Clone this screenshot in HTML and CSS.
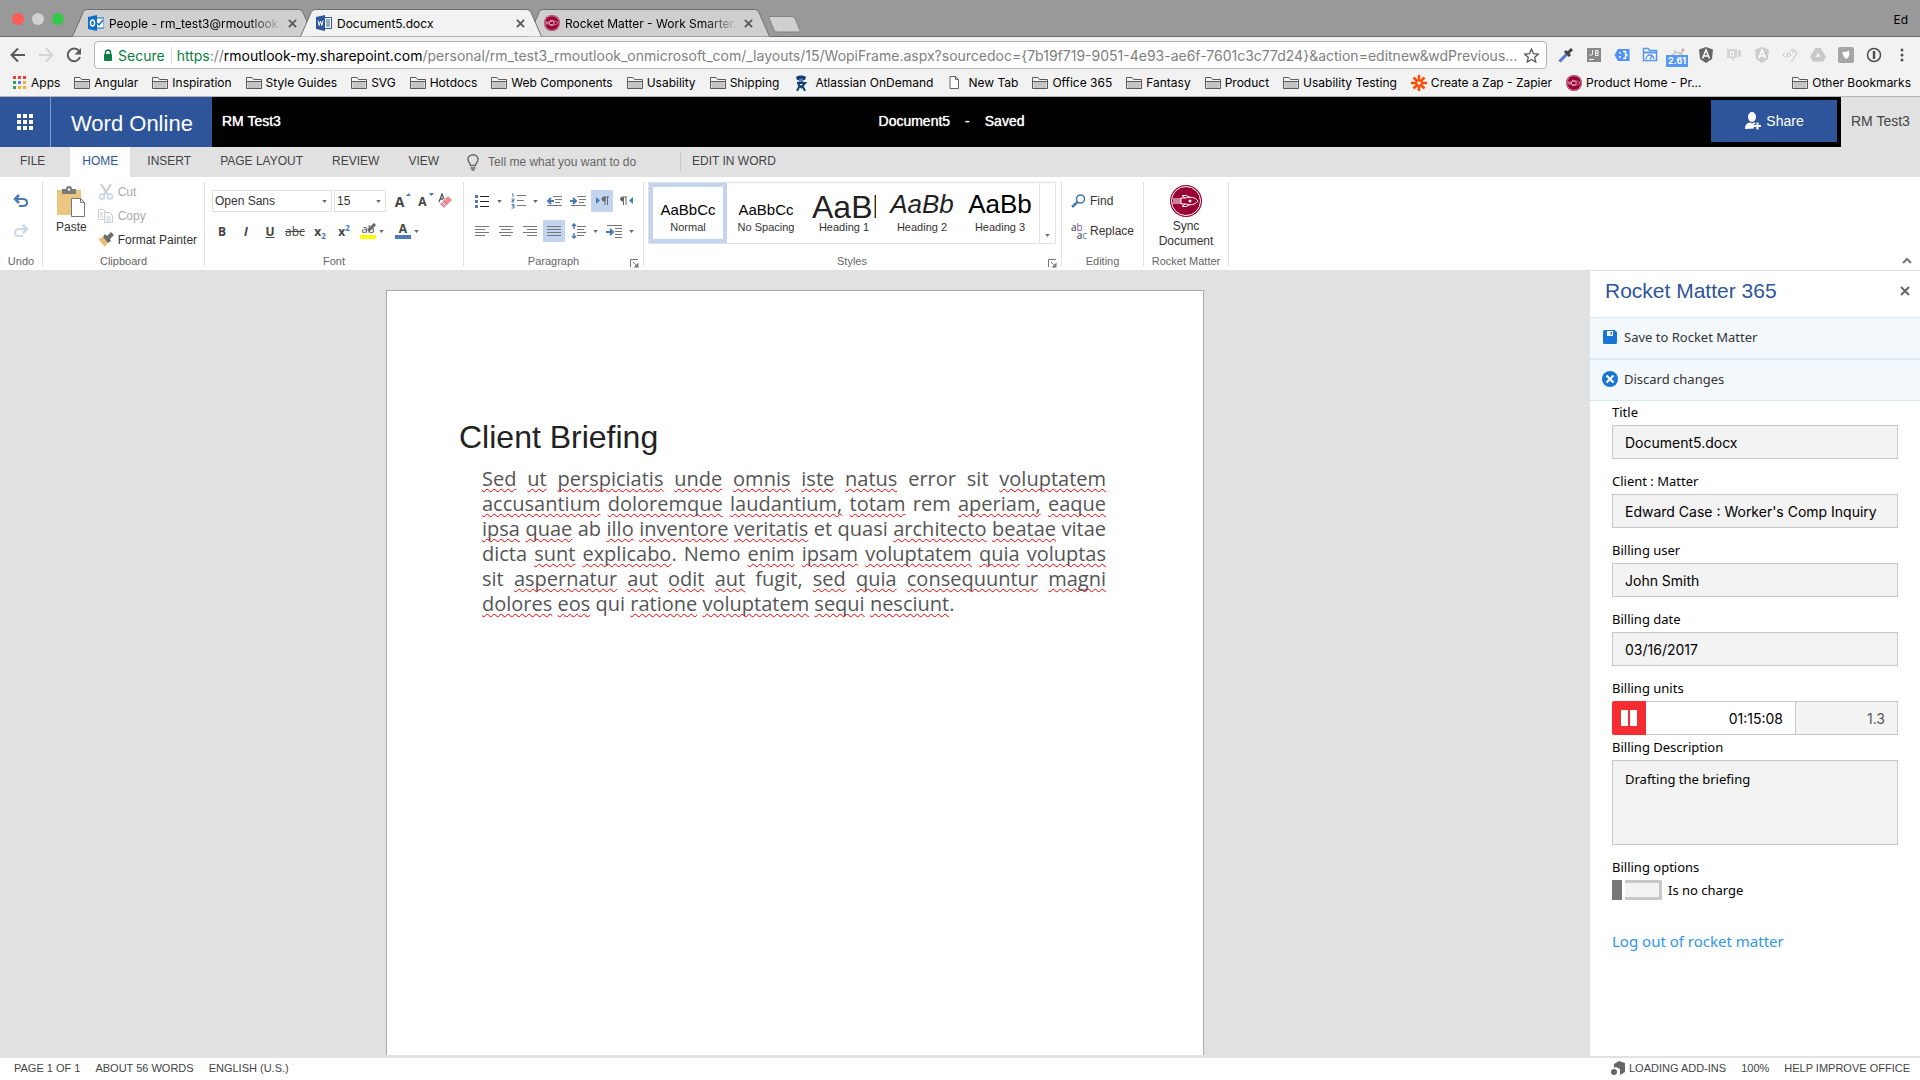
FILE: index.html
```
<!DOCTYPE html>
<html lang="en">
<head>
    <meta charset="UTF-8">
    <meta name="viewport" content="width=device-width, initial-scale=1.0">
    <title>Document5.docx</title>
    <link rel="stylesheet" href="styles.css">
</head>
<body>
    <!-- shared symbols -->
    <svg class="defs" width="0" height="0">
        <symbol id="folder" viewBox="0 0 16 14"><path d="M.5 12.500V1.500H6l1.500 2h8v9z" fill="#f5f5f5" stroke="#5a5a5a"/><path d="M1.500 5.500h13v6.500h-13z" fill="#c4c4c4"/><path d="M.5 5.500h15" stroke="#5a5a5a"/></symbol>
        <symbol id="tabshape" viewBox="0 0 242 28"><path d="M.5 27.500 11 3.500Q12.500.5 15 .5H227q2.500 0 4 3l10.500 24" stroke="#6e6e6e"/></symbol>
        <symbol id="rocket" viewBox="0 0 32 32"><circle cx="16" cy="16" r="16" fill="#990033"/><circle cx="16" cy="16" r="14.500" fill="none" stroke="#fff" stroke-width="1"/><path d="M11 13h5c4-1.500 9-1 12 3-3 4-8 4.500-12 3h-5zM15 13l-3-2.500h4l4 2M15 19l-3 2.500h4l4-2M3 14h8M3 16h8M3 18h8" fill="none" stroke="#fff"/><circle cx="20" cy="16" r="1.500" fill="#fff"/></symbol>
        <symbol id="caret" viewBox="0 0 6 4"><path d="M0 0h6L3 4z" fill="#666"/></symbol>
        <symbol id="launcher" viewBox="0 0 9 9"><path d="M.5 8V.5H8M3 3l4 4" fill="none" stroke="#777"/><path d="M8.500 3.500v5h-5z" fill="#777"/></symbol>
        <symbol id="cross" viewBox="0 0 10 10"><path d="M1 1l8 8M9 1 1 9" fill="none" stroke="currentColor" stroke-width="2"/></symbol>
        <symbol id="shield" viewBox="0 0 16 16"><path d="M8 0l7 2.500-1 9.500-6 4-6-4L1 2.500z"/><path d="M4.500 11.500 8 3l3.500 8.500M6 9h4" fill="none" stroke="#fff" stroke-width="1.500"/></symbol>
    </svg>

    <header class="browser">
        <div class="tab-strip">
            <div class="lights"><i class="red"></i><i class="grey"></i><i class="green"></i></div>
            <div class="tab">
                <svg class="shape" fill="#cfcfcf"><use href="#tabshape"/></svg>
                <svg width="16" height="16" viewBox="0 0 16 16"><path d="M8 3h8v10H8z" fill="#fff" stroke="#0f6fc5"/><path d="M9 8l2 2 4-5" fill="none" stroke="#0f6fc5" stroke-width="1.500"/><path d="M0 2l9-2v16l-9-2z" fill="#0f6fc5"/><ellipse cx="4.500" cy="8" rx="2" ry="3" fill="none" stroke="#fff" stroke-width="1.500"/></svg>
                <span class="tab-title fade">People - rm_test3@rmoutlook.c</span>
                <button class="tab-close" aria-label="Close tab"><svg width="9" height="9"><use href="#cross"/></svg></button>
            </div>
            <div class="tab active">
                <svg class="shape" fill="#f2f2f2"><use href="#tabshape"/></svg>
                <svg width="16" height="16" viewBox="0 0 16 16"><path d="M8 2.500h7.500v11H8z" fill="#fff" stroke="#2b579a"/><path d="M10 5h4M10 7h4M10 9h4M10 11h4" stroke="#2b579a"/><path d="M0 2l9-2v16l-9-2z" fill="#2b579a"/><path d="M2 5.500l1.200 5L4.500 6l1.300 4.500L7 5.500" fill="none" stroke="#fff"/></svg>
                <span class="tab-title">Document5.docx</span>
                <button class="tab-close" aria-label="Close tab"><svg width="9" height="9"><use href="#cross"/></svg></button>
            </div>
            <div class="tab">
                <svg class="shape" fill="#cfcfcf"><use href="#tabshape"/></svg>
                <svg width="16" height="16"><use href="#rocket"/></svg>
                <span class="tab-title fade">Rocket Matter - Work Smarter.</span>
                <button class="tab-close" aria-label="Close tab"><svg width="9" height="9"><use href="#cross"/></svg></button>
            </div>
            <button class="new-tab" aria-label="New tab"><svg width="33" height="17" viewBox="0 0 33 17"><path d="M1 2q-.5-1.500 1-1.500h22q2 0 3 2l5 12q.5 1.500-1 1.500H9q-2 0-3-2z" fill="#d0d0d0" stroke="#828282"/></svg></button>
            <span class="profile">Ed</span>
        </div>
        <div class="toolbar">
            <button aria-label="Back"><svg width="16" height="16" viewBox="0 0 16 16"><path d="M15 8H2M8 1.500 1.500 8 8 14.500" fill="none" stroke="#5a5a5a" stroke-width="2"/></svg></button>
            <button aria-label="Forward"><svg width="16" height="16" viewBox="0 0 16 16"><path d="M1 8h13M8 1.500 14.500 8 8 14.500" fill="none" stroke="#d3d3d3" stroke-width="2"/></svg></button>
            <button aria-label="Reload"><svg width="16" height="16" viewBox="0 0 16 16"><path d="M13 4A6.300 6.300 0 1 0 14 10" fill="none" stroke="#5a5a5a" stroke-width="2"/><path d="M15 1v6.500H8.500z" fill="#5a5a5a"/></svg></button>
            <div class="address">
                <svg width="10" height="13" viewBox="0 0 10 13"><rect x="1" y="5" width="8" height="7" rx="1" fill="#0b8043"/><path d="M2.500 6V3.500a2.500 2.500 0 0 1 5 0V6" fill="none" stroke="#0b8043" stroke-width="1.500"/></svg>
                <span class="secure">Secure</span>
                <div class="url" role="textbox" aria-label="Address"><span class="scheme">https</span>://<span class="host">rmoutlook-my.sharepoint.com</span>/personal/rm_test3_rmoutlook_onmicrosoft_com/_layouts/15/WopiFrame.aspx?sourcedoc={7b19f719-9051-4e93-ae6f-7601c3c77d24}&amp;action=editnew&amp;wdPrevious...</div>
                <svg width="15" height="15" viewBox="0 0 16 16"><path d="M8 1l2.100 4.900 5.300.5-4 3.500 1.200 5.100L8 12.300 3.400 15l1.200-5.100-4-3.500 5.300-.5z" fill="none" stroke="#5a5a5a" stroke-width="1.400"/></svg>
            </div>
            <div class="extensions">
                <svg viewBox="0 0 16 16"><path d="M1.500 14.500 9 7" stroke="#5577cc" stroke-width="3"/><path d="M7 4l5 5M10 6l4-4" stroke="#444" stroke-width="3"/></svg>
                <svg viewBox="0 0 16 16"><path d="M1 1h14v14H1z" fill="#888"/><path d="M3 12.500h5M6.500 3v4q0 1.500-3 1M9.500 3.500v5H12V3.500zM9.500 6H12" fill="none" stroke="#fff"/></svg>
                <svg viewBox="0 0 16 16"><path d="M4 2h11.500v12H4L.5 8z" fill="#4d90fe"/><path d="M9 4.500h2.500v2.500L13 8l-1.500 1v2.500H9M6 5v2M6 9v2" fill="none" stroke="#fff" stroke-width="1.500"/></svg>
                <svg viewBox="0 0 16 16"><path d="M1.500 13.500v-12h5l1 2h7v10z" fill="#fff" stroke="#5795ea" stroke-width="1.500"/><path d="M1.500 5.500h13" stroke="#5795ea" stroke-width="2"/><path d="M4 12a4 4 0 0 1 8 0M8 12l2-3" fill="none" stroke="#5795ea" stroke-width="1.500"/></svg>
                <span class="badged"><svg viewBox="0 0 16 16"><path d="M1 10a7 7 0 0 1 13 0M8 10l6-8M4 3l2 2" fill="none" stroke="#aaa"/><circle cx="13" cy="3" r="1.500" fill="#dba0a0"/></svg><b>2.61</b></span>
                <svg fill="#666"><use href="#shield"/></svg>
                <svg viewBox="0 0 16 16"><path d="M1 2h10v9H8v3l-3-3H1zM12 3h3v7h-3z" fill="#d4d4d4"/><path d="M4.500 5h3v4h-3z" fill="none" stroke="#fff"/></svg>
                <svg fill="#ccc"><use href="#shield"/></svg>
                <svg viewBox="0 0 16 16"><path d="M3 6 1 8l2 2M6 5 4.500 11M7 6l2 2-2 2M8 4a3.500 3.500 0 1 1 6 4q-2 2-2.500 4-.5 2-2.500 2M10 5q2-2 2.500 1" fill="none" stroke="#c4c4c4"/></svg>
                <svg viewBox="0 0 16 16"><path d="M5.500 1h5L16 10l-2.500 4.500h-11L0 10z" fill="#c8c8c8"/><path d="M8 5.500 5.500 10h5z" fill="#f2f2f2"/></svg>
                <svg viewBox="0 0 16 16"><rect width="16" height="16" rx="2" fill="#a5a5a5"/><path d="M4.500 5q4 0 6.500-1.500 1.500 6-2.500 8.500-4-2-4-7z" fill="#fff"/></svg>
                <svg viewBox="0 0 16 16"><circle cx="8" cy="8" r="6.500" fill="none" stroke="#4e4e4e" stroke-width="1.500"/><path d="M8 4v8" stroke="#4e4e4e" stroke-width="2.500"/></svg>
                <svg viewBox="0 0 16 16" fill="#555"><circle cx="8" cy="3" r="1.500"/><circle cx="8" cy="8" r="1.500"/><circle cx="8" cy="13" r="1.500"/></svg>
            </div>
        </div>
        <nav class="bookmarks">
            <a href="#" class="apps"><svg width="13" height="13" viewBox="0 0 13 13"><path d="M0 0h3v3H0zM5 0h3v3H5zM10 0h3v3h-3z" fill="#ea4335"/><path d="M0 5h3v3H0zM0 10h3v3H0z" fill="#34a060"/><path d="M5 5h3v3H5z" fill="#4285f4"/><path d="M10 5h3v3h-3zM5 10h3v3H5zM10 10h3v3h-3z" fill="#f5b028"/></svg>Apps</a>
            <a href="#"><svg><use href="#folder"/></svg>Angular</a>
            <a href="#"><svg><use href="#folder"/></svg>Inspiration</a>
            <a href="#"><svg><use href="#folder"/></svg>Style Guides</a>
            <a href="#"><svg><use href="#folder"/></svg>SVG</a>
            <a href="#"><svg><use href="#folder"/></svg>Hotdocs</a>
            <a href="#"><svg><use href="#folder"/></svg>Web Components</a>
            <a href="#"><svg><use href="#folder"/></svg>Usability</a>
            <a href="#"><svg><use href="#folder"/></svg>Shipping</a>
            <a href="#" class="wide"><svg width="12" height="16" viewBox="0 0 12 16"><path d="M1 2q2-2 5-1.500Q9 0 11 2l-1 3H2z" fill="#123f73"/><circle cx="6" cy="6" r="2.500" fill="#5b7fa8"/><path d="M2 8h8L7.500 11l2.500 5M4.500 11 2 16M3 9l4 4" fill="none" stroke="#123f73" stroke-width="2"/></svg>Atlassian OnDemand</a>
            <a href="#" class="wide"><svg width="11" height="13" viewBox="0 0 11 13"><path d="M1 .5h5.500l3 3v9H1zM6.500.5v3h3" fill="#fff" stroke="#666"/></svg>New Tab</a>
            <a href="#"><svg><use href="#folder"/></svg>Office 365</a>
            <a href="#"><svg><use href="#folder"/></svg>Fantasy</a>
            <a href="#"><svg><use href="#folder"/></svg>Product</a>
            <a href="#"><svg><use href="#folder"/></svg>Usability Testing</a>
            <a href="#"><svg width="16" height="16" viewBox="0 0 16 16"><path d="M8 0v16M0 8h16M2.500 2.500l11 11M13.500 2.500l-11 11" stroke="#ff4a00" stroke-width="2.500"/><circle cx="8" cy="8" r="1.800" fill="#f2f2f2"/></svg>Create a Zap - Zapier</a>
            <a href="#"><svg width="16" height="16"><use href="#rocket"/></svg>Product Home - Pr...</a>
            <a href="#" class="other"><svg><use href="#folder"/></svg>Other Bookmarks</a>
        </nav>
    </header>

    <div class="app-bar">
        <button class="launcher" aria-label="App launcher"><svg width="17" height="16" viewBox="0 0 17 16" fill="#fff"><path d="M0 0h4v4H0zM6 0h4v4H6zM12 0h4v4h-4zM0 6h4v4H0zM6 6h4v4H6zM12 6h4v4h-4zM0 12h4v4H0zM6 12h4v4H6zM12 12h4v4h-4z"/></svg></button>
        <a href="#" class="brand">Word Online</a>
        <div class="doc-bar">
            <span class="crumb">RM Test3</span>
            <span class="doc-name"><span>Document5</span><span>-</span><span>Saved</span></span>
            <button class="share"><svg width="18" height="18" viewBox="0 0 18 18" fill="#fff"><ellipse cx="8" cy="5" rx="4" ry="5"/><path d="M1 17q0-6 5-6.500l2 1 2-1q2 0 3 2v1h-3v3z"/><path d="M13.500 10.500v7M10 14h7" stroke="#2e5599" stroke-width="4"/><path d="M13.500 10.500v7M10 14h7" stroke="#fff" stroke-width="2"/></svg>Share</button>
        </div>
        <span class="user">RM Test3</span>
    </div>

    <nav class="ribbon-tabs">
        <button class="file">FILE</button>
        <button class="on">HOME</button>
        <button>INSERT</button>
        <button>PAGE LAYOUT</button>
        <button>REVIEW</button>
        <button>VIEW</button>
        <label class="tell" for="tell"><svg width="12" height="17" viewBox="0 0 12 17"><path d="M3.500 11.500C3.500 9 1 8.500 1 5.500a5 4.800 0 0 1 10 0c0 3-2.500 3.500-2.500 6z" fill="none" stroke="#666" stroke-width="1.400"/><path d="M3.500 14h5M4.500 16h3" stroke="#666" stroke-width="1.500"/></svg></label>
        <input id="tell" type="text" placeholder="Tell me what you want to do">
        <button class="edit">EDIT IN WORD</button>
    </nav>

    <div class="ribbon">
        <section class="group undo">
            <div class="stack">
                <button aria-label="Undo"><svg width="16" height="16" viewBox="0 0 16 16"><path d="M2 6h8q4 0 4 3.500T10 13H6" fill="none" stroke="#4a7ab5" stroke-width="2"/><path d="M6 2 2 6l4 4" fill="none" stroke="#4a7ab5" stroke-width="2.500"/></svg></button>
                <button aria-label="Redo"><svg width="16" height="16" viewBox="0 0 16 16"><path d="M14 6H6Q2 6 2 9.500T6 13h4" fill="none" stroke="#cbd9ea" stroke-width="2"/><path d="M10 2l4 4-4 4" fill="none" stroke="#cbd9ea" stroke-width="2.500"/></svg></button>
            </div>
            <h2>Undo</h2>
        </section>
        <section class="group clipboard">
            <div class="row">
                <button class="big"><svg width="30" height="32" viewBox="0 0 30 32"><path d="M1 4h24v25H1z" fill="#eac681"/><path d="M6 3h4q0-3 3-3t3 3h4v5H6z" fill="#7a7a7a"/><circle cx="13" cy="3.500" r="1.200" fill="#fff"/><path d="M15.500 12.500h9l4 4v14h-13z" fill="#fff" stroke="#777"/><path d="M24.500 12.500v4h4" fill="none" stroke="#777"/></svg>Paste</button>
                <div class="list">
                    <button disabled><svg width="16" height="16" viewBox="0 0 16 16"><path d="M3 0l7 11M13 0 6 11" stroke="#ccc" stroke-width="2"/><circle cx="4" cy="12.500" r="2.500" fill="none" stroke="#c5d5e8" stroke-width="1.500"/><circle cx="12" cy="12.500" r="2.500" fill="none" stroke="#c5d5e8" stroke-width="1.500"/></svg>Cut</button>
                    <button disabled><svg width="16" height="16" viewBox="0 0 16 16"><path d="M.5 1.500h5l3 3v7h-8z" fill="#fff" stroke="#ccc"/><path d="M6.500 4.500h5l3 3v7h-8z" fill="#fff" stroke="#ccc"/><path d="M2 5h3M2 7h3M2 9h3M8 9h5M8 11h5M8 13h5" stroke="#bcd0e8"/></svg>Copy</button>
                    <button><svg width="16" height="16" viewBox="0 0 16 16"><path d="M0 7l5-2 5 5-3 5z" fill="#eac07a"/><path d="M5 5l2-3 2 2 4-4 3 3-4 4 1 2-3 2z" fill="#6c6c6c"/></svg>Format Painter</button>
                </div>
            </div>
            <h2>Clipboard</h2>
        </section>
        <section class="group font">
            <div class="row top">
                <div class="pick name"><select aria-label="Font"><option>Open Sans</option></select><svg><use href="#caret"/></svg></div>
                <div class="pick size"><select aria-label="Font size"><option>15</option></select><svg><use href="#caret"/></svg></div>
                <button aria-label="Grow font" class="glyph">A<svg class="tick" width="5" height="3" viewBox="0 0 5 3"><path d="M0 3h5L2.500 0z" fill="#4a7ab5"/></svg></button>
                <button aria-label="Shrink font" class="glyph small">A<svg class="tick" width="5" height="3" viewBox="0 0 5 3"><path d="M0 0h5L2.500 3z" fill="#4a7ab5"/></svg></button>
                <button aria-label="Clear formatting"><svg width="15" height="16" viewBox="0 0 15 16"><path d="M1 9 4 1l2 5M2 6h3" fill="none" stroke="#555" stroke-width="1.300"/><path d="M2 11 10 3l4 4-8 8z" fill="#e8899b"/><path d="M4 9l4 4" stroke="#fff"/></svg></button>
            </div>
            <div class="row marks">
                <button><b>B</b></button>
                <button><b><i>I</i></b></button>
                <button><b><u>U</u></b></button>
                <button class="strike"><s>abc</s></button>
                <button><b>x<sub>2</sub></b></button>
                <button><b>x<sup>2</sup></b></button>
                <button aria-label="Highlight" class="swatch hl"><span>ab</span><svg class="pen" width="10" height="9" viewBox="0 0 10 9"><path d="M1 8 8 1" stroke="#666" stroke-width="3"/></svg></button>
                <svg class="caret"><use href="#caret"/></svg>
                <button aria-label="Font color" class="swatch fc"><span>A</span></button>
                <svg class="caret"><use href="#caret"/></svg>
            </div>
            <h2>Font</h2>
        </section>
        <section class="group paragraph">
            <div class="row top">
                <button aria-label="Bullets"><svg width="14" height="14" viewBox="0 0 14 14"><path d="M0 1h3v3H0zM0 6h3v3H0zM0 11h3v3H0z" fill="#4a7ab5"/><path d="M5 2.500h9M5 7.500h9M5 12.500h9" stroke="#222"/></svg></button>
                <svg class="caret"><use href="#caret"/></svg>
                <button aria-label="Numbering"><svg width="15" height="16" viewBox="0 0 15 16"><path d="M1 1h1v3M.5 6H3v1.500H1V9h2M.5 11.500H3V15H.5M1 13h2" fill="none" stroke="#4a7ab5"/><path d="M6 2.500h9M6 7.500h7M6 12.500h9" stroke="#777"/></svg></button>
                <svg class="caret"><use href="#caret"/></svg>
                <button aria-label="Outdent"><svg width="16" height="11" viewBox="0 0 16 11"><path d="M7 .5h9M9 3.500h7M9 6.500h5M1 9.500h15" stroke="#777"/><path d="M8 5H2M5 2 2 5l3 3" fill="none" stroke="#4a7ab5" stroke-width="2"/></svg></button>
                <button aria-label="Indent"><svg width="16" height="11" viewBox="0 0 16 11"><path d="M7 .5h9M9 3.500h7M9 6.500h5M1 9.500h15" stroke="#777"/><path d="M0 5h6M3 2l3 3-3 3" fill="none" stroke="#4a7ab5" stroke-width="2"/></svg></button>
                <button aria-label="Left to right" class="pressed"><svg width="13" height="10" viewBox="0 0 13 10"><path d="M0 1v7l4-3.500z" fill="#4a7ab5"/><path d="M13 1H8a2 2 0 0 0 0 4h1V1M9 1v8M11.500 1v8" fill="#666" stroke="#666"/></svg></button>
                <button aria-label="Right to left"><svg width="13" height="10" viewBox="0 0 13 10"><path d="M13 1v7L9 4.500z" fill="#4a7ab5"/><path d="M7 1H2.500a2 2 0 0 0 0 4h1V1M3.500 1v8M6 1v8" fill="#666" stroke="#666"/></svg></button>
            </div>
            <div class="row aligns">
                <button aria-label="Align left"><svg width="14" height="11" viewBox="0 0 14 11"><path d="M0 .5h14M0 3.500h10M0 6.500h14M0 9.500h10" stroke="#777"/></svg></button>
                <button aria-label="Center"><svg width="14" height="11" viewBox="0 0 14 11"><path d="M0 .5h14M2 3.500h10M0 6.500h14M2 9.500h10" stroke="#777"/></svg></button>
                <button aria-label="Align right"><svg width="14" height="11" viewBox="0 0 14 11"><path d="M0 .5h14M4 3.500h10M0 6.500h14M4 9.500h10" stroke="#777"/></svg></button>
                <button aria-label="Justify" class="pressed"><svg width="14" height="11" viewBox="0 0 14 11"><path d="M0 .5h14M0 3.500h14M0 6.500h14M0 9.500h14" stroke="#777"/></svg></button>
                <button aria-label="Line spacing"><svg width="15" height="16" viewBox="0 0 15 16"><path d="M6 3.500h9M6 6.500h7M6 9.500h9M6 12.500h7" stroke="#777"/><path d="M3 1v5M3 10v5M1 3l2-2 2 2M1 13l2 2 2-2" fill="none" stroke="#4a7ab5" stroke-width="1.500"/></svg></button>
                <svg class="caret"><use href="#caret"/></svg>
                <button aria-label="Special indent"><svg width="16" height="13" viewBox="0 0 16 13"><path d="M1 .5h15M9 3.500h7M9 6.500h7M9 9.500h7M9 12.500h7" stroke="#777"/><path d="M0 7h6M4 4l3 3-3 3" fill="none" stroke="#4a7ab5" stroke-width="2"/></svg></button>
                <svg class="caret"><use href="#caret"/></svg>
            </div>
            <h2>Paragraph</h2>
            <svg class="dialog"><use href="#launcher"/></svg>
        </section>
        <section class="group styles">
            <div class="gallery">
                <button class="selected"><span class="sample">AaBbCc</span>Normal</button>
                <button><span class="sample">AaBbCc</span>No Spacing</button>
                <button><span class="sample h1">AaBb</span>Heading 1</button>
                <button><span class="sample h2">AaBb</span>Heading 2</button>
                <button><span class="sample h3">AaBb</span>Heading 3</button>
                <button class="more" aria-label="More styles"><svg class="caret"><use href="#caret"/></svg></button>
            </div>
            <h2>Styles</h2>
            <svg class="dialog"><use href="#launcher"/></svg>
        </section>
        <section class="group editing">
            <div class="stack">
                <button><svg width="16" height="14" viewBox="0 0 16 14"><circle cx="9.500" cy="5" r="4" fill="none" stroke="#4a7ab5" stroke-width="1.600"/><path d="M6.500 8 1 13" stroke="#4a7ab5" stroke-width="2.500"/></svg>Find</button>
                <button><span class="swap"><span>a<em>b</em></span><span class="to">a<em>c</em></span></span>Replace</button>
            </div>
            <h2>Editing</h2>
        </section>
        <section class="group sync">
            <button class="big"><svg width="32" height="32"><use href="#rocket"/></svg>Sync Document</button>
            <h2>Rocket Matter</h2>
        </section>
        <button class="collapse" aria-label="Collapse ribbon"><svg width="10" height="7" viewBox="0 0 10 7"><path d="M1 6l4-4 4 4" fill="none" stroke="#777" stroke-width="2"/></svg></button>
    </div>

    <div class="workspace">
        <main class="canvas">
            <article class="page">
                <h1>Client Briefing</h1>
                <p><span>Sed</span> <span>ut</span> <span>perspiciatis</span> <span>unde</span> <span>omnis</span> <span>iste</span> <span>natus</span> error sit <span>voluptatem</span> <span>accusantium</span> <span>doloremque</span> <span>laudantium,</span> <span>totam</span> rem <span>aperiam,</span> <span>eaque</span> <span>ipsa</span> <span>quae</span> ab <span>illo</span> <span>inventore</span> <span>veritatis</span> et quasi <span>architecto</span> <span>beatae</span> vitae dicta <span>sunt</span> <span>explicabo</span>. Nemo <span>enim</span> <span>ipsam</span> <span>voluptatem</span> <span>quia</span> <span>voluptas</span> sit <span>aspernatur</span> <span>aut</span> <span>odit</span> <span>aut</span> fugit, <span>sed</span> <span>quia</span> <span>consequuntur</span> <span>magni</span> <span>dolores</span> <span>eos</span> qui <span>ratione</span> <span>voluptatem</span> <span>sequi</span> <span>nesciunt</span>.</p>
            </article>
        </main>
        <aside class="panel">
            <header>
                <h2>Rocket Matter 365</h2>
                <button aria-label="Close panel"><svg width="10" height="10"><use href="#cross"/></svg></button>
            </header>
            <button class="action"><svg width="16" height="14" viewBox="0 0 16 14"><path d="M2.500 0h10L15 2v10.500q0 1.500-1.500 1.500h-11Q1 14 1 12.500v-11Q1 0 2.500 0z" fill="#1976d2"/><path d="M5 1h6v5H5z" fill="#fff"/><path d="M8.500 2h1.500v2.500H8.500z" fill="#1976d2"/></svg>Save to Rocket Matter</button>
            <button class="action"><svg width="16" height="16" viewBox="0 0 16 16"><circle cx="8" cy="8" r="8" fill="#1976d2"/><path d="M4.500 4.500l7 7M11.500 4.500l-7 7" stroke="#fff" stroke-width="2.200"/></svg>Discard changes</button>
            <form>
                <label for="title">Title</label>
                <input id="title" type="text" value="Document5.docx">
                <label for="matter">Client : Matter</label>
                <input id="matter" type="text" value="Edward Case : Worker's Comp Inquiry">
                <label for="user">Billing user</label>
                <input id="user" type="text" value="John Smith">
                <label for="date">Billing date</label>
                <input id="date" type="text" value="03/16/2017">
                <label for="timer">Billing units</label>
                <div class="units">
                    <button type="button" aria-label="Pause timer"><svg width="16" height="16" viewBox="0 0 16 16"><path d="M0 0h7v16H0zM9 0h7v16H9z" fill="#fff"/></svg></button>
                    <input id="timer" type="text" value="01:15:08">
                    <input class="total" type="text" value="1.3" aria-label="Units">
                </div>
                <label for="description">Billing Description</label>
                <textarea id="description">Drafting the briefing</textarea>
                <div class="legend">Billing options</div>
                <label class="toggle"><input type="checkbox">Is no charge</label>
                <a href="#" class="logout">Log out of rocket matter</a>
            </form>
        </aside>
    </div>

    <footer class="status">
        <span>PAGE 1 OF 1</span>
        <span>ABOUT 56 WORDS</span>
        <span>ENGLISH (U.S.)</span>
        <span class="addins"><svg width="14" height="14" viewBox="0 0 14 14" fill="#666"><path d="M3 3l5-3 6 2v9l-5 3V8L5 6 3 7z"/><circle cx="3" cy="11" r="3"/></svg>LOADING ADD-INS</span>
        <span>100%</span>
        <span>HELP IMPROVE OFFICE</span>
    </footer>
</body>
</html>
```
FILE: styles.css
```
* {
    box-sizing: border-box;
}
body {
    margin: 0;
    height: 100vh;
    display: flex;
    flex-direction: column;
    overflow: hidden;
    background: #fff;
    color: #444;
    font-family: "Liberation Sans", Arial, sans-serif;
    font-size: 12px;
}
button, input, select, textarea {
    font: inherit;
    color: inherit;
}
button {
    display: flex;
    align-items: center;
    justify-content: center;
    padding: 0;
    border: 0;
    background: none;
    white-space: nowrap;
}
a {
    color: inherit;
    text-decoration: none;
}
h1, h2, p {
    margin: 0;
    font-weight: normal;
}
svg {
    flex: none;
}
.defs {
    position: absolute;
}

/* Browser window */
.browser {
    flex: none;
    background: #f2f2f2;
    border-bottom: 1px solid #b4b4b4;
    color: #000;
    font-family: Inter, sans-serif;
}
.tab-strip {
    display: flex;
    align-items: flex-end;
    height: 37px;
    background: #999;
    border-bottom: 1px solid #6e6e6e;
}
.lights {
    display: flex;
    gap: 8px;
    width: 72px;
    height: 25px;
    padding-left: 12px;
    align-self: flex-start;
    align-items: flex-end;
}
.lights i {
    width: 12px;
    height: 12px;
    border-radius: 50%;
}
.lights .red {
    background: #fc5b57;
}
.lights .grey {
    background: #d0d0d0;
}
.lights .green {
    background: #34c84a;
}
.tab {
    position: relative;
    display: flex;
    align-items: center;
    width: 242px;
    height: 28px;
    margin: 0 -14px -1px 0;
    padding: 0 17px 0 16px;
}
.tab.active {
    z-index: 1;
}
.tab > svg, .tab > span, .tab > button {
    position: relative;
}
.tab .shape {
    position: absolute;
    left: 0;
    top: 0;
    width: 242px;
    height: 28px;
}
.tab-title {
    flex: 1;
    margin: 0 5px;
    overflow: hidden;
    white-space: nowrap;
}
.tab-title.fade {
    mask-image: linear-gradient(to right, #000 80%, transparent);
}
.tab-close {
    color: #5a5a5a;
}
.new-tab {
    margin: 0 0 3px 12px;
}
.profile {
    margin-left: auto;
    padding: 0 12px 9px 0;
}
.toolbar {
    display: flex;
    align-items: center;
    height: 34px;
    padding: 2px 10px 0 10px;
    gap: 12px;
}
.address {
    flex: 1;
    display: flex;
    align-items: center;
    height: 28px;
    min-width: 0;
    padding: 0 7px 0 8px;
    border: 1px solid #b5b5b5;
    border-radius: 4px;
    background: #fff;
    font-size: 14px;
}
.secure {
    margin: 0 6px 0 5px;
    color: #0b8043;
}
.url {
    flex: 1;
    min-width: 0;
    padding-left: 5px;
    border-left: 1px solid #ddd;
    color: #808080;
    overflow: hidden;
    text-overflow: ellipsis;
    white-space: nowrap;
}
.scheme {
    color: #0b8043;
}
.host {
    color: #000;
}
.extensions {
    display: flex;
    gap: 12px;
    margin-left: -1px;
}
.extensions svg {
    display: block;
    width: 16px;
    height: 16px;
}
.badged {
    position: relative;
}
.badged b {
    position: absolute;
    top: 8px;
    left: -4px;
    padding: 0 2px;
    background: #5599f5;
    color: #fff;
    font-size: 9px;
    line-height: 12px;
}
.bookmarks {
    display: flex;
    align-items: center;
    gap: 14px;
    height: 25px;
    padding: 0 9px 2px 13px;
}
.bookmarks a {
    display: flex;
    align-items: center;
    gap: 4px;
    white-space: nowrap;
}
.bookmarks a > svg:not([width]) {
    width: 16px;
    height: 14px;
}
.bookmarks .apps {
    gap: 5px;
}
.bookmarks .wide {
    gap: 8px;
    padding-left: 2px;
}
.bookmarks .other {
    margin-left: auto;
}

/* Word header */
.app-bar {
    flex: none;
    display: flex;
    height: 50px;
    background: #e1e1e1;
    font-size: 14px;
}
.app-bar .launcher {
    width: 51px;
    border-right: 1px solid #7f9ac6;
    background: #2e5599;
}
.brand {
    width: 161px;
    padding: 0 20px;
    background: #2e5599;
    color: #fff;
    font-size: 22px;
    line-height: 53px;
    white-space: nowrap;
}
.doc-bar {
    flex: 1;
    display: flex;
    align-items: center;
    justify-content: space-between;
    padding: 0 4px 2px 10px;
    background: #000;
    color: #fff;
    text-shadow: 0 0 1px #fff;
}
.crumb, .share {
    width: 126px;
}
.doc-name {
    display: flex;
    gap: 15px;
    margin-right: 156px;
}
.doc-bar .share {
    height: 42px;
    gap: 4px;
    background: #2e5599;
}
.user {
    width: 79px;
    padding-left: 10px;
    line-height: 48px;
}

/* Ribbon */
.ribbon-tabs {
    flex: none;
    display: flex;
    height: 30px;
    background: #e1e1e1;
}
.ribbon-tabs button {
    margin-right: 5px;
    padding: 0 12px 3px;
}
.ribbon-tabs .file {
    padding: 0 12px 3px 20px;
    margin-right: 13px;
}
.ribbon-tabs .on {
    background: #fff;
    color: #2e5599;
}
.tell {
    display: flex;
    align-items: center;
    margin: 0 9px 0 11px;
}
.ribbon-tabs input {
    width: 180px;
    padding: 0;
    border: 0;
    background: none;
}
.ribbon-tabs input::placeholder {
    color: #666;
}
.ribbon-tabs .edit {
    align-self: center;
    height: 18px;
    margin-left: 12px;
    padding: 0 11px 2px;
    border-left: 1px solid #c6c6c6;
}
.ribbon {
    flex: none;
    display: flex;
    height: 94px;
    padding: 5px 0 4px;
    border-bottom: 1px solid #e1e1e1;
}
.group {
    position: relative;
    display: flex;
    flex-direction: column;
    border-right: 1px solid #e1e1e1;
}
.group h2 {
    margin-top: auto;
    font-size: 11px;
    line-height: 10px;
    text-align: center;
    color: #666;
}
.row {
    display: flex;
    align-items: center;
}
.dialog {
    position: absolute;
    right: 4px;
    bottom: -2px;
    width: 9px;
    height: 9px;
}
svg.caret {
    width: 5px;
    height: 3px;
}
.undo {
    width: 43px;
}
.stack {
    display: flex;
    flex-direction: column;
    align-items: center;
    gap: 14px;
    padding-top: 11px;
}
.clipboard {
    width: 162px;
}
.clipboard .row {
    align-items: flex-start;
    padding: 4px 0 0 13px;
    gap: 11px;
}
.big {
    flex-direction: column;
    color: #333;
}
.clipboard .big {
    gap: 2px;
}
.list {
    display: flex;
    flex-direction: column;
    align-items: flex-start;
    gap: 8px;
    margin-top: -2px;
    color: #333;
}
.list button {
    gap: 4px;
}
.list button:disabled {
    color: #aaa;
}
.font {
    width: 259px;
}
.font .row {
    padding-left: 7px;
}
.font .marks {
    padding-left: 5px;
}
.row.top {
    height: 38px;
}
.pick {
    position: relative;
    margin-right: 2px;
}
.pick select {
    width: 100%;
    height: 22px;
    padding: 0 2px;
    border: 1px solid #e1e1e1;
    background: #fff;
    color: #333;
    appearance: none;
}
.pick svg {
    position: absolute;
    right: 5px;
    top: 10px;
    width: 5px;
    height: 3px;
}
.pick.name {
    width: 120px;
}
.pick.size {
    width: 52px;
}
.font .top button {
    position: relative;
    width: 23px;
    height: 22px;
}
.glyph {
    font: bold 14px "Open Sans", sans-serif;
}
.glyph.small {
    font-size: 12px;
}
.tick {
    position: absolute;
    top: 3px;
    right: 0;
}
.marks {
    height: 22px;
    font-family: "Open Sans", sans-serif;
    font-size: 12px;
}
.marks button {
    width: 24px;
    height: 22px;
}
.marks .strike {
    width: 26px;
}
.marks sub, .marks sup {
    color: #4a7ab5;
    font-size: 8px;
    line-height: 0;
}
.marks .swatch {
    position: relative;
    width: 16px;
    height: 16px;
    margin: 0 3px 0 4px;
    border-bottom: 4px solid #ff0;
    line-height: 12px;
}
.marks .fc {
    margin-left: 11px;
    border-color: #4a7ab5;
    font-weight: bold;
}
.hl span {
    font-size: 11px;
}
.pen {
    position: absolute;
    right: -1px;
    top: 0;
}
.paragraph {
    width: 180px;
}
.paragraph .row {
    padding-left: 6px;
}
.paragraph button {
    width: 24px;
    height: 22px;
}
.paragraph button.pressed {
    width: 22px;
    margin: 0 1px;
    background: #c2d4f0;
}
.paragraph .caret {
    margin: 0 4px 0 3px;
}
.aligns {
    height: 22px;
}
.styles {
    width: 418px;
    padding: 0 5px 0 4px;
}
.gallery {
    display: flex;
    height: 62px;
    border: 1px solid #e1e1e1;
}
.gallery button {
    flex-direction: column;
    justify-content: flex-end;
    width: 78px;
    padding-bottom: 4px;
    border: 4px solid transparent;
    font-size: 11px;
    line-height: 15px;
    color: #333;
}
.gallery .selected {
    border-color: #c2d4f0;
}
.sample {
    color: #000;
    font-size: 15px;
    line-height: 20px;
}
.sample.h1 {
    width: 64px;
    overflow: hidden;
    font-size: 32px;
    line-height: 40px;
    color: #222;
    text-align: left;
}
.sample.h2, .sample.h3 {
    font-size: 26px;
    line-height: 32px;
}
.sample.h2 {
    font-style: italic;
    color: #222;
}
.gallery .more {
    width: auto;
    flex: 1;
    padding-bottom: 6px;
    border: 0;
    border-left: 1px solid #e1e1e1;
}
.editing {
    width: 82px;
}
.editing .stack {
    align-items: flex-start;
    padding-left: 9px;
    color: #333;
}
.editing button {
    gap: 3px;
    height: 16px;
}
.swap {
    display: flex;
    flex-direction: column;
    width: 16px;
    font: 10px/8px "Open Sans", sans-serif;
    text-align: left;
}
.swap em {
    font-style: normal;
    color: #8a4ea8;
}
.swap .to {
    text-align: right;
}
.swap .to em {
    color: #4a7ab5;
}
.sync {
    width: 85px;
}
.sync .big {
    margin-top: 3px;
    padding: 0 10px;
    gap: 2px;
    line-height: 15px;
    white-space: normal;
}
.collapse {
    align-self: flex-end;
    margin: 0 8px 2px auto;
}

/* Document area */
.workspace {
    flex: 1;
    display: flex;
    min-height: 0;
    padding-bottom: 2px;
    background: #e1e1e1;
}
.canvas {
    flex: 1;
    display: flex;
    justify-content: center;
    padding-top: 19px;
    padding-bottom: 1px;
}
.page {
    width: 818px;
    padding: 126px 97px 0 72px;
    border: 1px solid #aaa;
    border-bottom: 0;
    background: #fff;
}
.page h1 {
    color: #222;
    font-size: 32px;
    line-height: 40px;
}
.page p {
    margin: 9px 0 0 23px;
    color: #555;
    font-family: "Open Sans", sans-serif;
    font-size: 20px;
    line-height: 25px;
    text-align: justify;
}
.page p span {
    text-decoration: underline wavy #e00 1px;
    text-decoration-skip-ink: none;
    text-underline-offset: 2px;
}

/* Task pane */
.panel {
    width: 330px;
    background: #fff;
    color: #000;
    font-family: "Noto Sans", sans-serif;
    font-size: 13px;
}
.panel header {
    display: flex;
    align-items: center;
    justify-content: space-between;
    height: 46px;
    padding: 0 10px 6px 15px;
    color: #666;
}
.panel h2 {
    color: #2e5599;
    font-family: "Liberation Sans", Arial, sans-serif;
    font-size: 21px;
}
.action {
    justify-content: flex-start;
    gap: 6px;
    width: 100%;
    height: 42px;
    padding: 0 0 2px 12px;
    border: 1px solid #d6e9f8;
    border-width: 1px 0;
    background: #f3f8fd;
    color: #333;
}
.panel form {
    padding: 0 22px;
}
.panel form label, .legend {
    display: block;
    padding-bottom: 2px;
    line-height: 22px;
}
.panel input[type="text"], .panel textarea {
    display: block;
    width: 100%;
    height: 34px;
    margin-bottom: 11px;
    padding: 0 12px;
    border: 1px solid #c8c8c8;
    border-radius: 0;
    background: #f3f3f3;
    font-family: Inter, sans-serif;
    font-size: 14px;
}
.units {
    display: flex;
    margin-bottom: 1px;
}
.units button {
    width: 34px;
    height: 34px;
    border-radius: 2px 0 0 2px;
    background: #f52d32;
}
.panel .units input {
    flex: 1;
    min-width: 0;
    margin: 0;
    border-width: 1px 0;
    background: #fff;
    text-align: right;
}
.panel .units .total {
    flex: none;
    width: 103px;
    border-width: 1px;
    background: #f3f3f3;
    color: #555;
}
.panel textarea {
    height: 85px;
    padding: 9px 12px;
    font-family: "Noto Sans", sans-serif;
    font-size: 13px;
    resize: none;
}
.panel form .toggle {
    display: flex;
    align-items: center;
    gap: 6px;
    padding: 0;
    line-height: 20px;
}
.toggle input {
    position: relative;
    width: 50px;
    height: 20px;
    margin: 0;
    border: 3px solid #c8c8c8;
    background: #f3f3f3;
    appearance: none;
}
.toggle input::before {
    content: "";
    position: absolute;
    left: -3px;
    top: -3px;
    width: 10px;
    height: 20px;
    border-right: 3px solid #fff;
    background: #777;
    background-clip: padding-box;
}
.logout {
    display: inline-block;
    margin-top: 31px;
    color: #2e96ef;
    font-size: 15px;
    line-height: 20px;
}

/* Status bar */
.status {
    flex: none;
    display: flex;
    align-items: center;
    gap: 15px;
    height: 22px;
    padding: 0 10px 2px 14px;
    font-size: 11px;
}
.addins {
    display: flex;
    align-items: center;
    gap: 4px;
    margin-left: auto;
}
```
